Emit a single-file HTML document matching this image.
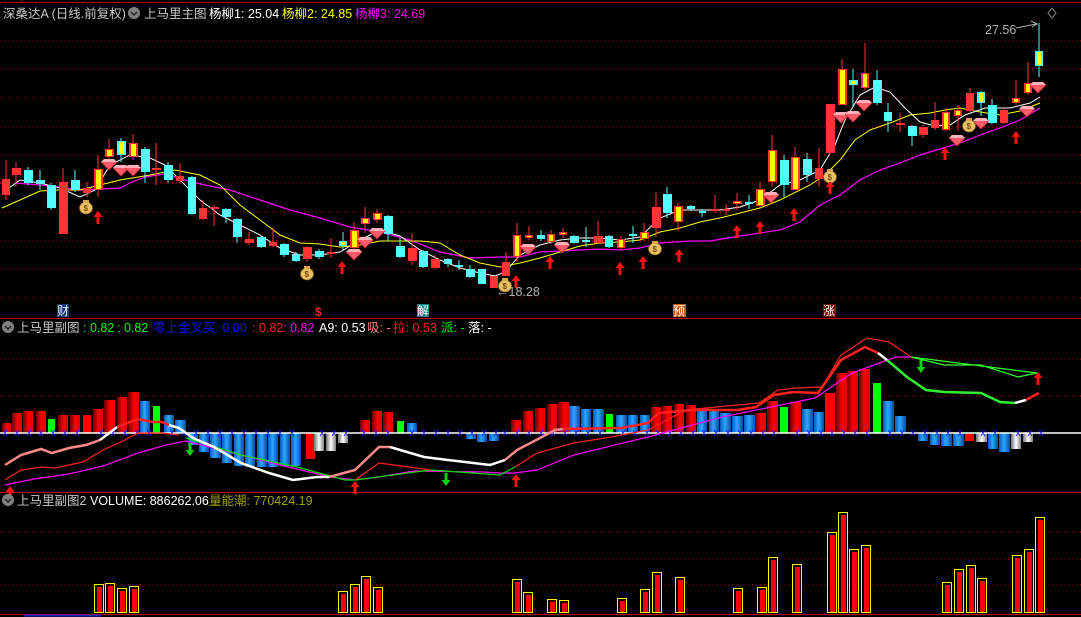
<!DOCTYPE html>
<html><head><meta charset="utf-8"><style>
html,body{margin:0;padding:0;background:#000;width:1081px;height:617px;overflow:hidden}
svg{display:block}
text{font-family:"Liberation Sans","Noto Sans CJK SC",sans-serif;font-size:12.5px}
</style></head><body>
<svg width="1081" height="617" viewBox="0 0 1081 617" xmlns="http://www.w3.org/2000/svg">
<defs>
<linearGradient id="gr" x1="0" x2="1"><stop offset="0" stop-color="#6a0000"/><stop offset="0.55" stop-color="#ff0000"/><stop offset="1" stop-color="#e00000"/></linearGradient>
<linearGradient id="gb" x1="0" x2="1"><stop offset="0" stop-color="#0a58b8"/><stop offset="0.45" stop-color="#2aa8ff"/><stop offset="1" stop-color="#0848a0"/></linearGradient>
<linearGradient id="gw" x1="0" x2="1"><stop offset="0" stop-color="#707070"/><stop offset="0.5" stop-color="#ffffff"/><stop offset="1" stop-color="#808080"/></linearGradient>
<g id="gem"><polygon points="-8,-2 -5,-5 5,-5 8,-2 0,6" fill="#ff5a6a"/><polygon points="-8,-2 -5,-5 5,-5 8,-2" fill="#ffb0b8"/><polyline points="-8,-2 0,6 8,-2" fill="none" stroke="#c02030" stroke-width="0.8"/></g>
<g id="bag"><ellipse cx="0" cy="2" rx="6.5" ry="6" fill="#e8c068" stroke="#8a6010" stroke-width="0.8"/><rect x="-3" y="-6" width="6" height="3" fill="#d8a848"/></g>
<g id="up"><polygon points="0,-6 -4.5,0 -1.5,0 -1.5,7 1.5,7 1.5,0 4.5,0" fill="#ff1010"/></g>
<g id="dn"><polygon points="0,6 -4.5,0 -1.5,0 -1.5,-7 1.5,-7 1.5,0 4.5,0" fill="#10d010"/></g>
</defs>

<!-- borders -->
<line x1="0" y1="2.5" x2="1081" y2="2.5" stroke="#c00000"/>
<line x1="22" y1="0" x2="22" y2="3" stroke="#c00000"/>
<g stroke="#b00000" stroke-dasharray="1,3">
<line x1="0" y1="41" x2="1081" y2="41"/><line x1="0" y1="69" x2="1081" y2="69"/><line x1="0" y1="98" x2="1081" y2="98"/>
<line x1="0" y1="127" x2="1081" y2="127"/><line x1="0" y1="155" x2="1081" y2="155"/><line x1="0" y1="183" x2="1081" y2="183"/>
<line x1="0" y1="212" x2="1081" y2="212"/><line x1="0" y1="241" x2="1081" y2="241"/><line x1="0" y1="269" x2="1081" y2="269"/>
<line x1="0" y1="298" x2="1081" y2="298"/>
<line x1="0" y1="359" x2="1081" y2="359"/><line x1="0" y1="396" x2="1081" y2="396"/>
<line x1="0" y1="532" x2="1081" y2="532"/><line x1="0" y1="559" x2="1081" y2="559"/><line x1="0" y1="585" x2="1081" y2="585"/>
</g>
<line x1="0" y1="318.5" x2="1081" y2="318.5" stroke="#c00000"/>
<line x1="0" y1="492.5" x2="1081" y2="492.5" stroke="#c00000"/>
<line x1="0" y1="614.5" x2="1081" y2="614.5" stroke="#c00000"/>
<line x1="24" y1="615.5" x2="101" y2="615.5" stroke="#2020c0" stroke-width="2"/>

<!-- header -->
<text x="3" y="18" fill="#c8c8c8">深桑达A (日线.前复权)</text>
<circle cx="134" cy="13" r="6" fill="#808080"/><polyline points="131,12 134,15 137,12" fill="none" stroke="#222" stroke-width="1.5"/>
<text x="144" y="18" fill="#c8c8c8">上马里主图</text>
<text x="209" y="18" fill="#ffffff">杨柳1: 25.04</text>
<text x="282" y="18" fill="#ffff00">杨柳2: 24.85</text>
<text x="355" y="18" fill="#ff00ff">杨柳3: 24.69</text>
<polygon points="1052,8 1056,13 1052,18 1048,13" fill="none" stroke="#909090"/>

<!-- MA lines -->
<polyline fill="none" stroke="#ff00ff" stroke-width="1.2" points="15,183 40,185 60,187 80,190 100,189 120,188 130,183 145,177 165,174 185,180 205,185 230,190 260,200 290,210 320,218 350,227 380,232 410,240 440,252 470,258 500,257 520,257 540,252 580,250 600,249 620,250 640,248 660,243 690,241 710,241 740,236 780,230 800,222 820,205 840,195 860,180 880,170 900,163 920,155 940,149 960,143 980,135 1000,128 1020,120 1040,108"/>
<polyline fill="none" stroke="#ffff00" stroke-width="1" points="2,208 20,200 40,191 60,190 80,190 100,185 120,180 150,175 175,170 200,175 220,185 240,205 260,220 280,235 300,243 320,244 340,247 360,245 380,241 420,241 440,243 460,255 480,263 500,267 520,263 540,258 560,252 580,246 600,243 620,242 640,240 660,232 680,228 700,222 720,218 740,213 760,208 780,200 810,185 825,175 840,160 855,140 870,130 890,123 910,115 930,113 945,110 960,108 980,112 1000,115 1020,111 1040,103"/>
<polyline fill="none" stroke="#ffffff" stroke-width="1" points="2,193 20,180 40,183 60,188 80,197 95,190 110,165 130,155 150,158 165,165 180,180 200,200 220,215 240,225 260,235 280,248 300,255 320,255 340,252 360,240 380,230 400,236 420,250 440,260 460,268 480,273 495,276 505,272 520,255 540,245 560,240 580,238 600,238 620,240 640,237 660,218 680,210 700,210 720,210 740,207 760,200 780,185 800,180 820,170 835,145 845,120 860,95 875,87 890,92 905,108 920,122 935,126 950,125 965,115 985,108 1010,108 1030,103 1040,97"/>

<!-- candles: wicks -->
<g stroke-width="1">
<g stroke="#ff3333">
<line x1="6" y1="160" x2="6" y2="200"/><line x1="16" y1="162" x2="16" y2="186"/><line x1="63" y1="168" x2="63" y2="234"/><line x1="87" y1="182" x2="87" y2="197"/>
<line x1="98" y1="155" x2="98" y2="197"/><line x1="109" y1="139" x2="109" y2="160"/><line x1="133" y1="134" x2="133" y2="160"/><line x1="156" y1="143" x2="156" y2="185"/>
<line x1="180" y1="163" x2="180" y2="183"/><line x1="203" y1="200" x2="203" y2="220"/><line x1="214" y1="205" x2="214" y2="226"/><line x1="249" y1="232" x2="249" y2="245"/>
<line x1="273" y1="228" x2="273" y2="247"/><line x1="307" y1="246" x2="307" y2="262"/><line x1="331" y1="238" x2="331" y2="258"/><line x1="354" y1="222" x2="354" y2="250"/>
<line x1="365" y1="207" x2="365" y2="233"/><line x1="377" y1="209" x2="377" y2="223"/><line x1="412" y1="233" x2="412" y2="265"/><line x1="435" y1="255" x2="435" y2="269"/>
<line x1="494" y1="276" x2="494" y2="288"/><line x1="506" y1="252" x2="506" y2="276"/><line x1="517" y1="223" x2="517" y2="262"/><line x1="529" y1="226" x2="529" y2="240"/>
<line x1="551" y1="230" x2="551" y2="244"/><line x1="563" y1="228" x2="563" y2="238"/><line x1="598" y1="221" x2="598" y2="244"/><line x1="621" y1="236" x2="621" y2="250"/>
<line x1="644" y1="223" x2="644" y2="241"/><line x1="656" y1="192" x2="656" y2="237"/><line x1="678" y1="203" x2="678" y2="231"/><line x1="715" y1="195" x2="715" y2="213"/>
<line x1="726" y1="204" x2="726" y2="215"/><line x1="737" y1="193" x2="737" y2="210"/><line x1="760" y1="182" x2="760" y2="208"/><line x1="772" y1="135" x2="772" y2="187"/>
<line x1="795" y1="147" x2="795" y2="190"/><line x1="819" y1="148" x2="819" y2="187"/><line x1="830" y1="104" x2="830" y2="155"/><line x1="842" y1="59" x2="842" y2="105"/>
<line x1="865" y1="43" x2="865" y2="90"/><line x1="900" y1="113" x2="900" y2="132"/><line x1="923" y1="125" x2="923" y2="138"/><line x1="935" y1="102" x2="935" y2="130"/>
<line x1="946" y1="108" x2="946" y2="131"/><line x1="958" y1="105" x2="958" y2="131"/><line x1="970" y1="88" x2="970" y2="112"/><line x1="1004" y1="108" x2="1004" y2="124"/>
<line x1="1016" y1="80" x2="1016" y2="105"/><line x1="1028" y1="62" x2="1028" y2="95"/>
</g>
<g stroke="#54fcfc">
<line x1="28" y1="167" x2="28" y2="185"/><line x1="40" y1="170" x2="40" y2="190"/><line x1="51" y1="183" x2="51" y2="210"/><line x1="75" y1="170" x2="75" y2="192"/>
<line x1="121" y1="138" x2="121" y2="162"/><line x1="145" y1="147" x2="145" y2="183"/><line x1="168" y1="162" x2="168" y2="183"/><line x1="192" y1="176" x2="192" y2="215"/>
<line x1="226" y1="208" x2="226" y2="223"/><line x1="237" y1="218" x2="237" y2="243"/><line x1="261" y1="236" x2="261" y2="248"/><line x1="284" y1="243" x2="284" y2="257"/>
<line x1="296" y1="252" x2="296" y2="262"/><line x1="319" y1="249" x2="319" y2="259"/><line x1="343" y1="232" x2="343" y2="250"/><line x1="388" y1="215" x2="388" y2="241"/>
<line x1="400" y1="238" x2="400" y2="258"/><line x1="423" y1="250" x2="423" y2="268"/><line x1="448" y1="258" x2="448" y2="267"/><line x1="459" y1="260" x2="459" y2="270"/>
<line x1="470" y1="265" x2="470" y2="278"/><line x1="541" y1="230" x2="541" y2="241"/><line x1="574" y1="235" x2="574" y2="244"/><line x1="586" y1="227" x2="586" y2="247"/>
<line x1="609" y1="235" x2="609" y2="248"/><line x1="633" y1="226" x2="633" y2="243"/><line x1="667" y1="187" x2="667" y2="218"/><line x1="691" y1="205" x2="691" y2="211"/>
<line x1="702" y1="209" x2="702" y2="217"/><line x1="749" y1="195" x2="749" y2="209"/><line x1="784" y1="155" x2="784" y2="197"/><line x1="807" y1="153" x2="807" y2="182"/>
<line x1="853" y1="69" x2="853" y2="107"/><line x1="877" y1="70" x2="877" y2="105"/><line x1="888" y1="103" x2="888" y2="132"/><line x1="912" y1="125" x2="912" y2="146"/>
<line x1="981" y1="91" x2="981" y2="116"/><line x1="992" y1="99" x2="992" y2="124"/><line x1="1039" y1="23" x2="1039" y2="77"/>
</g>
</g>
<!-- candle bodies -->
<g fill="#ff3333">
<rect x="2" y="179" width="8" height="16"/><rect x="12" y="168" width="9" height="7"/><rect x="59" y="182" width="9" height="52"/><rect x="83" y="188" width="8" height="5"/>
<rect x="152" y="168" width="9" height="2"/><rect x="176" y="176" width="8" height="5"/><rect x="199" y="208" width="8" height="11"/><rect x="210" y="207" width="9" height="2"/>
<rect x="245" y="239" width="9" height="4"/><rect x="269" y="242" width="8" height="4"/><rect x="303" y="247" width="9" height="12"/><rect x="327" y="252" width="8" height="2"/>
<rect x="408" y="248" width="9" height="13"/><rect x="431" y="259" width="9" height="9"/><rect x="490" y="276" width="8" height="12"/><rect x="502" y="262" width="8" height="14"/>
<rect x="594" y="236" width="9" height="7"/><rect x="652" y="207" width="9" height="21"/><rect x="711" y="209" width="8" height="2"/><rect x="723" y="209" width="7" height="2"/>
<rect x="815" y="168" width="8" height="11"/><rect x="826" y="104" width="9" height="49"/><rect x="896" y="123" width="9" height="2"/><rect x="919" y="127" width="9" height="8"/>
<rect x="931" y="120" width="8" height="8"/><rect x="966" y="93" width="8" height="18"/><rect x="1000" y="110" width="8" height="13"/>
<!-- YR outer -->
<rect x="94" y="169" width="9" height="21"/><rect x="105" y="149" width="9" height="8"/><rect x="129" y="143" width="9" height="14"/><rect x="350" y="230" width="9" height="18"/>
<rect x="361" y="218" width="9" height="6"/><rect x="373" y="213" width="9" height="7"/><rect x="513" y="235" width="8" height="22"/><rect x="525" y="235" width="8" height="3"/>
<rect x="547" y="234" width="8" height="8"/><rect x="559" y="232" width="8" height="3"/><rect x="617" y="239" width="8" height="9"/><rect x="640" y="232" width="9" height="7"/>
<rect x="674" y="206" width="9" height="16"/><rect x="733" y="201" width="9" height="3"/><rect x="756" y="189" width="9" height="17"/><rect x="768" y="150" width="9" height="32"/>
<rect x="791" y="157" width="9" height="33"/><rect x="838" y="69" width="9" height="36"/><rect x="861" y="73" width="8" height="15"/><rect x="942" y="112" width="8" height="18"/>
<rect x="954" y="110" width="8" height="6"/><rect x="1012" y="98" width="8" height="5"/><rect x="1024" y="83" width="8" height="10"/>
</g>
<g fill="#54fcfc">
<rect x="24" y="170" width="9" height="13"/><rect x="36" y="180" width="9" height="4"/><rect x="47" y="185" width="9" height="23"/><rect x="71" y="180" width="9" height="10"/>
<rect x="141" y="149" width="9" height="23"/><rect x="164" y="165" width="9" height="15"/><rect x="188" y="177" width="8" height="37"/><rect x="222" y="209" width="9" height="8"/>
<rect x="233" y="219" width="9" height="18"/><rect x="257" y="237" width="9" height="10"/><rect x="280" y="244" width="9" height="11"/><rect x="292" y="254" width="8" height="7"/>
<rect x="315" y="251" width="9" height="6"/><rect x="384" y="216" width="9" height="18"/><rect x="396" y="246" width="9" height="11"/><rect x="419" y="251" width="9" height="16"/>
<rect x="444" y="259" width="8" height="5"/><rect x="455" y="265" width="8" height="2"/><rect x="466" y="269" width="9" height="8"/><rect x="478" y="269" width="8" height="15"/>
<rect x="537" y="235" width="8" height="4"/><rect x="570" y="236" width="9" height="7"/><rect x="582" y="240" width="8" height="2"/><rect x="605" y="236" width="8" height="11"/>
<rect x="629" y="234" width="8" height="2"/><rect x="663" y="194" width="9" height="19"/><rect x="687" y="206" width="8" height="3"/><rect x="699" y="211" width="7" height="2"/>
<rect x="745" y="202" width="8" height="2"/><rect x="780" y="160" width="9" height="25"/><rect x="803" y="159" width="9" height="16"/><rect x="873" y="80" width="9" height="23"/>
<rect x="884" y="112" width="8" height="9"/><rect x="908" y="126" width="9" height="10"/><rect x="988" y="105" width="9" height="18"/>
<!-- YC outer -->
<rect x="117" y="141" width="9" height="14"/><rect x="339" y="241" width="8" height="5"/><rect x="849" y="80" width="9" height="5"/><rect x="977" y="92" width="8" height="11"/><rect x="1035" y="51" width="8" height="15"/>
</g>
<g fill="#ffff00">
<rect x="96" y="170" width="5" height="19"/><rect x="107" y="150" width="5" height="6"/><rect x="131" y="144" width="5" height="12"/><rect x="352" y="231" width="5" height="16"/>
<rect x="363" y="219" width="5" height="4"/><rect x="375" y="214" width="5" height="5"/><rect x="515" y="236" width="4" height="20"/><rect x="527" y="236" width="4" height="1"/>
<rect x="549" y="235" width="4" height="6"/><rect x="561" y="233" width="4" height="1"/><rect x="619" y="240" width="4" height="7"/><rect x="642" y="233" width="5" height="5"/>
<rect x="676" y="207" width="5" height="14"/><rect x="735" y="202" width="5" height="1"/><rect x="758" y="190" width="5" height="15"/><rect x="770" y="151" width="5" height="30"/>
<rect x="793" y="158" width="5" height="31"/><rect x="840" y="70" width="5" height="34"/><rect x="863" y="74" width="4" height="13"/><rect x="944" y="113" width="4" height="16"/>
<rect x="956" y="111" width="4" height="4"/><rect x="1014" y="99" width="4" height="3"/><rect x="1026" y="84" width="4" height="8"/>
<rect x="119" y="142" width="5" height="12"/><rect x="341" y="242" width="4" height="3"/><rect x="851" y="81" width="5" height="3"/><rect x="979" y="93" width="4" height="9"/><rect x="1037" y="52" width="4" height="13"/>
</g>

<!-- icons main -->
<use href="#gem" x="109" y="164"/><use href="#gem" x="121" y="170"/><use href="#gem" x="133" y="170"/>
<use href="#gem" x="354" y="254"/><use href="#gem" x="365" y="242"/><use href="#gem" x="377" y="233"/><use href="#gem" x="528" y="249"/>
<use href="#gem" x="562" y="247"/><use href="#gem" x="771" y="197"/><use href="#gem" x="841" y="117"/><use href="#gem" x="853" y="116"/><use href="#gem" x="864" y="105"/>
<use href="#gem" x="957" y="140"/><use href="#gem" x="981" y="123"/><use href="#gem" x="1027" y="111"/><use href="#gem" x="1038" y="87"/>
<g font-size="8" fill="#7a4a00" font-weight="bold">
<use href="#bag" x="86" y="206"/><text x="83.5" y="211" style="font-size:8px" fill="#7a4a00">$</text>
<use href="#bag" x="307" y="272"/><text x="304.5" y="277" style="font-size:8px" fill="#7a4a00">$</text>
<use href="#bag" x="505" y="284"/><text x="502.5" y="289" style="font-size:8px" fill="#7a4a00">$</text>
<use href="#bag" x="655" y="247"/><text x="652.5" y="252" style="font-size:8px" fill="#7a4a00">$</text>
<use href="#bag" x="830" y="175"/><text x="827.5" y="180" style="font-size:8px" fill="#7a4a00">$</text>
<use href="#bag" x="969" y="124"/><text x="966.5" y="129" style="font-size:8px" fill="#7a4a00">$</text>
</g>
<use href="#up" x="98" y="217"/><use href="#up" x="342" y="267"/><use href="#up" x="516" y="281"/><use href="#up" x="550" y="262"/>
<use href="#up" x="620" y="268"/><use href="#up" x="643" y="262"/><use href="#up" x="679" y="255"/><use href="#up" x="737" y="231"/>
<use href="#up" x="760" y="227"/><use href="#up" x="794" y="214"/><use href="#up" x="830" y="187"/><use href="#up" x="945" y="153"/><use href="#up" x="1016" y="137"/>

<text x="985" y="34" fill="#b0b0b0">27.56</text>
<polyline points="1016,28 1036,24" fill="none" stroke="#b0b0b0"/><polyline points="1031,21 1037,24 1032,27" fill="none" stroke="#b0b0b0"/>
<text x="496" y="296" fill="#b0b0b0">←18.28</text>

<!-- labels -->
<rect x="57" y="304" width="12" height="13" fill="#17396a"/><text x="57" y="315" fill="#e0e8ff" style="font-size:12px">财</text>
<text x="315" y="316" fill="#ff2020" style="font-size:12px;font-weight:bold">$</text>
<rect x="417" y="304" width="12" height="13" fill="#168080"/><text x="417" y="315" fill="#ffffff" style="font-size:12px">解</text>
<rect x="673" y="304" width="13" height="13" fill="#c85a18"/><text x="673" y="315" fill="#ffffff" style="font-size:12px">预</text>
<rect x="823" y="304" width="13" height="13" fill="#800000"/><text x="823" y="315" fill="#ffffff" style="font-size:12px">涨</text>

<!-- pane 2 header -->
<circle cx="8" cy="327" r="6" fill="#808080"/><polyline points="5,326 8,329 11,326" fill="none" stroke="#222" stroke-width="1.5"/>
<text x="17" y="332" fill="#c8c8c8">上马里副图</text>
<text x="83" y="332" fill="#00ff00">: 0.82</text>
<text x="117" y="332" fill="#00ff00">: 0.82</text>
<text x="153" y="332" fill="#1010ff">零上金叉买: 0.00</text>
<text x="252" y="332" fill="#ff2020">: 0.82</text>
<text x="283" y="332" fill="#ff00ff">: 0.82</text>
<text x="319" y="332" fill="#ffffff">A9: 0.53</text>
<text x="367" y="332" fill="#ff8080">吸: -</text>
<text x="393" y="332" fill="#ff2020">拉: 0.53</text>
<text x="441" y="332" fill="#00ff00">派: -</text>
<text x="468" y="332" fill="#ffffff">落: -</text>

<!-- pane2 bars -->
<g fill="url(#gr)">
<rect x="2" y="423" width="9" height="10"/><rect x="12" y="413" width="10" height="20"/><rect x="23" y="411" width="10" height="22"/><rect x="36" y="411" width="10" height="22"/>
<rect x="58" y="415" width="10" height="18"/><rect x="70" y="415" width="10" height="18"/><rect x="93" y="409" width="10" height="24"/><rect x="104" y="400" width="11" height="33"/>
<rect x="117" y="397" width="10" height="36"/><rect x="128" y="392" width="11" height="41"/>
<rect x="360" y="420" width="10" height="13"/><rect x="372" y="411" width="10" height="22"/><rect x="383" y="412" width="10" height="21"/>
<rect x="511" y="420" width="10" height="13"/><rect x="523" y="411" width="10" height="22"/><rect x="535" y="408" width="10" height="25"/><rect x="547" y="404" width="10" height="29"/><rect x="558" y="402" width="11" height="31"/>
<rect x="651" y="407" width="10" height="26"/><rect x="662" y="406" width="10" height="27"/><rect x="674" y="404" width="10" height="29"/><rect x="686" y="405" width="10" height="28"/>
<rect x="755" y="413" width="11" height="20"/><rect x="767" y="401" width="11" height="32"/><rect x="790" y="402" width="11" height="31"/>
<rect x="836" y="373" width="11" height="60"/><rect x="847" y="371" width="11" height="62"/><rect x="859" y="369" width="11" height="64"/>
</g>
<g fill="#ff0000"><rect x="83" y="415" width="8" height="18"/><rect x="825" y="393" width="10" height="40"/><rect x="306" y="433" width="9" height="26"/><rect x="965" y="433" width="9" height="8"/></g>
<g fill="#00ff00"><rect x="48" y="419" width="7" height="14"/><rect x="153" y="406" width="7" height="27"/><rect x="397" y="421" width="7" height="12"/><rect x="606" y="414" width="7" height="19"/><rect x="780" y="407" width="8" height="26"/><rect x="873" y="383" width="8" height="50"/></g>
<g fill="url(#gb)">
<rect x="140" y="401" width="10" height="32"/><rect x="164" y="415" width="10" height="18"/><rect x="175" y="420" width="11" height="13"/><rect x="407" y="423" width="10" height="10"/>
<rect x="569" y="406" width="11" height="27"/><rect x="581" y="409" width="10" height="24"/><rect x="593" y="409" width="11" height="24"/><rect x="616" y="415" width="11" height="18"/>
<rect x="628" y="415" width="10" height="18"/><rect x="640" y="415" width="10" height="18"/><rect x="697" y="410" width="10" height="23"/><rect x="709" y="410" width="10" height="23"/>
<rect x="720" y="413" width="11" height="20"/><rect x="732" y="416" width="11" height="17"/><rect x="744" y="415" width="11" height="18"/><rect x="802" y="409" width="11" height="24"/>
<rect x="814" y="412" width="10" height="21"/><rect x="883" y="401" width="11" height="32"/><rect x="895" y="416" width="11" height="17"/>
<rect x="188" y="433" width="10" height="12"/><rect x="199" y="433" width="10" height="19"/><rect x="210" y="433" width="11" height="25"/><rect x="222" y="433" width="10" height="30"/>
<rect x="234" y="433" width="10" height="33"/><rect x="245" y="433" width="10" height="34"/><rect x="257" y="433" width="10" height="34"/><rect x="268" y="433" width="10" height="34"/>
<rect x="280" y="433" width="10" height="33"/><rect x="291" y="433" width="10" height="33"/>
<rect x="466" y="433" width="10" height="6"/><rect x="477" y="433" width="10" height="9"/><rect x="489" y="433" width="10" height="8"/>
<rect x="918" y="433" width="10" height="8"/><rect x="930" y="433" width="10" height="12"/><rect x="941" y="433" width="11" height="13"/><rect x="953" y="433" width="11" height="13"/>
<rect x="988" y="433" width="10" height="16"/><rect x="999" y="433" width="11" height="19"/>
</g>
<g fill="url(#gw)">
<rect x="314" y="433" width="10" height="18"/><rect x="326" y="433" width="10" height="18"/><rect x="338" y="433" width="10" height="10"/>
<rect x="976" y="433" width="11" height="9"/><rect x="1011" y="433" width="10" height="16"/><rect x="1023" y="433" width="10" height="9"/>
</g>
<line x1="0" y1="433" x2="1081" y2="433" stroke="#ffffff" stroke-width="1.5"/>
<g stroke="#1a1aff" stroke-width="0.9">
<path d="M3,430l4,6M7,430l-4,6M15,430l4,6M19,430l-4,6M27,430l4,6M31,430l-4,6M39,430l4,6M43,430l-4,6M51,430l4,6M55,430l-4,6M63,430l4,6M67,430l-4,6M75,430l4,6M79,430l-4,6M99,430l4,6M103,430l-4,6M111,430l4,6M115,430l-4,6M123,430l4,6M127,430l-4,6M135,430l4,6M139,430l-4,6M147,430l4,6M151,430l-4,6M170,430l4,6M174,430l-4,6M182,430l4,6M186,430l-4,6M194,430l4,6M198,430l-4,6M206,430l4,6M210,430l-4,6M218,430l4,6M222,430l-4,6M230,430l4,6M234,430l-4,6M242,430l4,6M246,430l-4,6M254,430l4,6M258,430l-4,6M266,430l4,6M270,430l-4,6M278,430l4,6M282,430l-4,6M290,430l4,6M294,430l-4,6M320,430l4,6M324,430l-4,6M332,430l4,6M336,430l-4,6M344,430l4,6M348,430l-4,6M362,430l4,6M366,430l-4,6M374,430l4,6M378,430l-4,6M386,430l4,6M390,430l-4,6M410,430l4,6M414,430l-4,6M422,430l4,6M426,430l-4,6M434,430l4,6M438,430l-4,6M446,430l4,6M450,430l-4,6M458,430l4,6M462,430l-4,6M470,430l4,6M474,430l-4,6M482,430l4,6M486,430l-4,6M494,430l4,6M498,430l-4,6M503,430l4,6M507,430l-4,6M515,430l4,6M519,430l-4,6M527,430l4,6M531,430l-4,6M539,430l4,6M543,430l-4,6M551,430l4,6M555,430l-4,6M563,430l4,6M567,430l-4,6M574,430l4,6M578,430l-4,6M586,430l4,6M590,430l-4,6M598,430l4,6M602,430l-4,6M621,430l4,6M625,430l-4,6M633,430l4,6M637,430l-4,6M645,430l4,6M649,430l-4,6M656,430l4,6M660,430l-4,6M668,430l4,6M672,430l-4,6M679,430l4,6M683,430l-4,6M691,430l4,6M695,430l-4,6M702,430l4,6M706,430l-4,6M714,430l4,6M718,430l-4,6M726,430l4,6M730,430l-4,6M738,430l4,6M742,430l-4,6M749,430l4,6M753,430l-4,6M761,430l4,6M765,430l-4,6M772,430l4,6M776,430l-4,6M795,430l4,6M799,430l-4,6M807,430l4,6M811,430l-4,6M819,430l4,6M823,430l-4,6M830,430l4,6M834,430l-4,6M842,430l4,6M846,430l-4,6M853,430l4,6M857,430l-4,6M865,430l4,6M869,430l-4,6M888,430l4,6M892,430l-4,6M900,430l4,6M904,430l-4,6M911,430l4,6M915,430l-4,6M923,430l4,6M927,430l-4,6M935,430l4,6M939,430l-4,6M946,430l4,6M950,430l-4,6M958,430l4,6M962,430l-4,6M981,430l4,6M985,430l-4,6M993,430l4,6M997,430l-4,6M1016,430l4,6M1020,430l-4,6M1028,430l4,6M1032,430l-4,6M1039,430l4,6M1043,430l-4,6"/>
</g>
<!-- pane2 lines -->
<polyline fill="none" stroke="#ff00ff" stroke-width="1.2" points="5,485 34,479 69,474 103,466 138,453 166,445 186,441 230,452 280,465 330,477 355,480 379,477 414,471 483,472 500,473 515,473 537,470 574,455 648,437 722,417 815,398 852,373 896,357 911,357"/>
<polyline fill="none" stroke="#00e000" stroke-width="1.2" points="186,438 241,455 297,467 345,480 355,480 431,470 500,475 515,467"/>
<polyline fill="none" stroke="#ff2020" stroke-width="1.2" points="5,480 21,470 41,467 55,468 83,462 103,450 121,442 138,433 162,433 179,435"/>
<polyline fill="none" stroke="#ff2020" stroke-width="1.2" points="355,480 379,463 431,470"/>
<polyline fill="none" stroke="#ff2020" stroke-width="1.2" points="515,467 537,453 574,443 611,437 648,430 667,420 685,410 759,403 778,390 796,388 822,387 841,355 867,338 889,342 911,357"/>
<polyline fill="none" stroke="#30ff30" stroke-width="1.2" points="911,357 944,365 981,365 1018,377 1037,373 911,357 1037,373"/>
<polyline fill="none" stroke="#ff8888" stroke-width="2.5" points="5,465 21,455 41,449 52,453 69,448 86,445 100,440"/>
<polyline fill="none" stroke="#ffffff" stroke-width="2.5" points="100,440 112,431 117,427"/>
<polyline fill="none" stroke="#ff2020" stroke-width="2.5" points="117,427 138,419 152,422 162,422 169,425"/>
<polyline fill="none" stroke="#ffffff" stroke-width="2.5" points="169,425 179,428 193,438 214,447 241,463 269,473 293,480 317,477 329,477"/>
<polyline fill="none" stroke="#ff8888" stroke-width="2.5" points="329,477 355,470 379,447 390,447"/>
<polyline fill="none" stroke="#ffffff" stroke-width="2.5" points="390,447 424,457 448,460 490,465 505,460"/>
<polyline fill="none" stroke="#ff8888" stroke-width="2.5" points="505,460 517,450 540,438 555,430 563,429"/>
<polyline fill="none" stroke="#ff2020" stroke-width="2.5" points="563,429 622,428 648,423 659,413 693,410 737,410 756,407 774,395 793,392 818,393 841,360 865,347 878,353"/>
<polyline fill="none" stroke="#ffffff" stroke-width="2.5" points="878,353 887,360"/>
<polyline fill="none" stroke="#30f030" stroke-width="2.5" points="887,360 907,377 926,390 944,392 981,393 1000,402 1015,403"/>
<polyline fill="none" stroke="#ffffff" stroke-width="2.5" points="1015,403 1026,400"/>
<polyline fill="none" stroke="#ff2020" stroke-width="2.5" points="1026,400 1039,393"/>
<use href="#up" x="10" y="492"/><use href="#up" x="355" y="487"/><use href="#up" x="516" y="480"/><use href="#up" x="1038" y="378"/>
<use href="#dn" x="190" y="450"/><use href="#dn" x="446" y="480"/><use href="#dn" x="921" y="367"/>

<!-- pane 3 -->
<circle cx="8" cy="500" r="6" fill="#808080"/><polyline points="5,499 8,502 11,499" fill="none" stroke="#222" stroke-width="1.5"/>
<text x="17" y="505" fill="#c8c8c8">上马里副图2</text>
<text x="90" y="505" fill="#ffffff">VOLUME: 886262.06</text>
<text x="209" y="505" fill="#a0a000">量能潮: 770424.19</text>
<g fill="#000" stroke="#ffff00" stroke-width="1">
<rect x="94.5" y="584.5" width="9" height="28"/><rect x="105.5" y="583.5" width="9" height="29"/><rect x="117.5" y="588.5" width="9" height="24"/><rect x="129.5" y="586.5" width="9" height="26"/>
<rect x="338.5" y="591.5" width="9" height="21"/><rect x="350.5" y="584.5" width="9" height="28"/><rect x="361.5" y="576.5" width="9" height="36"/><rect x="373.5" y="587.5" width="9" height="25"/>
<rect x="512.5" y="579.5" width="9" height="33"/><rect x="523.5" y="592.5" width="9" height="20"/><rect x="547.5" y="599.5" width="9" height="13"/><rect x="559.5" y="600.5" width="9" height="12"/>
<rect x="617.5" y="598.5" width="9" height="14"/><rect x="640.5" y="589.5" width="9" height="23"/><rect x="652.5" y="572.5" width="9" height="40"/><rect x="675.5" y="577.5" width="9" height="35"/>
<rect x="733.5" y="588.5" width="9" height="24"/><rect x="757.5" y="587.5" width="9" height="25"/><rect x="768.5" y="557.5" width="9" height="55"/><rect x="792.5" y="564.5" width="9" height="48"/>
<rect x="827.5" y="532.5" width="9" height="80"/><rect x="838.5" y="512.5" width="9" height="100"/><rect x="849.5" y="549.5" width="9" height="63"/><rect x="861.5" y="545.5" width="9" height="67"/>
<rect x="942.5" y="582.5" width="9" height="30"/><rect x="954.5" y="569.5" width="9" height="43"/><rect x="966.5" y="565.5" width="9" height="47"/><rect x="977.5" y="578.5" width="9" height="34"/>
<rect x="1012.5" y="555.5" width="9" height="57"/><rect x="1024.5" y="549.5" width="9" height="63"/><rect x="1035.5" y="517.5" width="9" height="95"/>
</g>
<g fill="#ff0000">
<rect x="97" y="587" width="5" height="25"/><rect x="108" y="586" width="5" height="26"/><rect x="120" y="591" width="5" height="21"/><rect x="132" y="589" width="5" height="23"/>
<rect x="341" y="594" width="5" height="18"/><rect x="353" y="587" width="5" height="25"/><rect x="364" y="579" width="5" height="33"/><rect x="376" y="590" width="5" height="22"/>
<rect x="515" y="582" width="5" height="30"/><rect x="526" y="595" width="5" height="17"/><rect x="550" y="602" width="5" height="10"/><rect x="562" y="603" width="5" height="9"/>
<rect x="620" y="601" width="5" height="11"/><rect x="643" y="592" width="5" height="20"/><rect x="655" y="575" width="5" height="37"/><rect x="678" y="580" width="5" height="32"/>
<rect x="736" y="591" width="5" height="21"/><rect x="760" y="590" width="5" height="22"/><rect x="771" y="560" width="5" height="52"/><rect x="795" y="567" width="5" height="45"/>
<rect x="830" y="535" width="5" height="77"/><rect x="841" y="515" width="5" height="97"/><rect x="852" y="552" width="5" height="60"/><rect x="864" y="548" width="5" height="64"/>
<rect x="945" y="585" width="5" height="27"/><rect x="957" y="572" width="5" height="40"/><rect x="969" y="568" width="5" height="44"/><rect x="980" y="581" width="5" height="31"/>
<rect x="1015" y="558" width="5" height="54"/><rect x="1027" y="552" width="5" height="60"/><rect x="1038" y="520" width="5" height="92"/>
</g>
</svg>
</body></html>
